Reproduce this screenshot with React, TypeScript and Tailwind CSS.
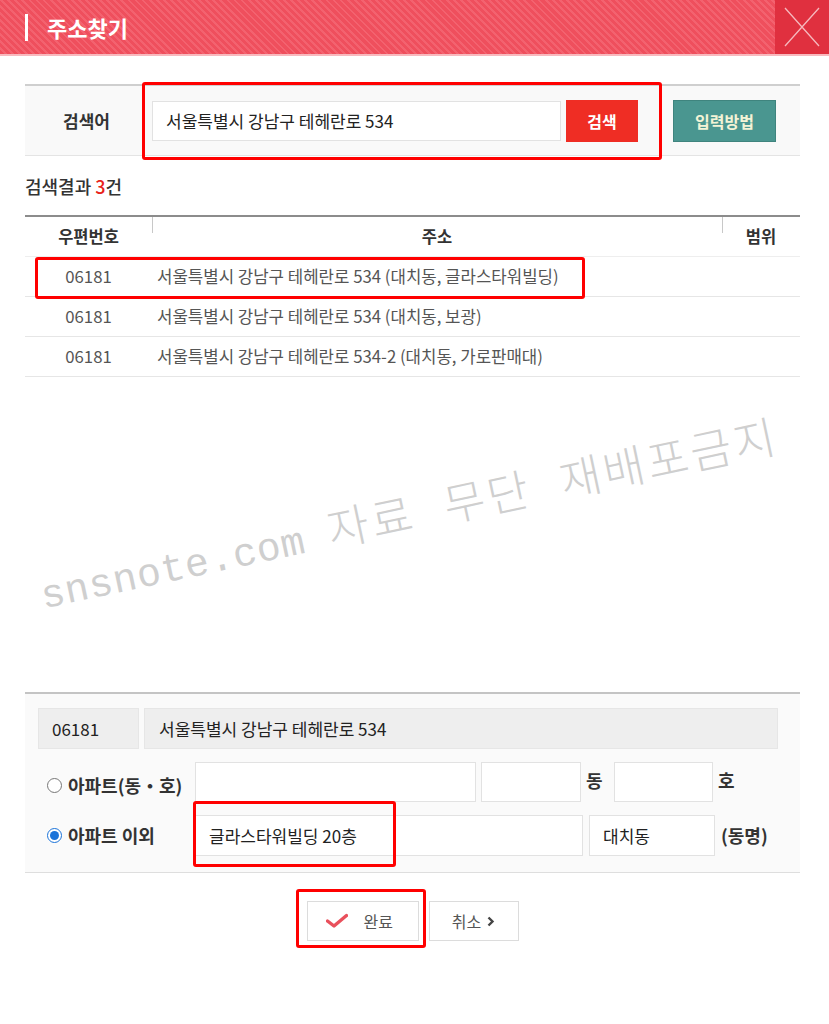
import type { ReactNode } from 'react';

const rows = [
  { zip: '06181', addr: '서울특별시 강남구 테헤란로 534 (대치동, 글라스타워빌딩)' },
  { zip: '06181', addr: '서울특별시 강남구 테헤란로 534 (대치동, 보광)' },
  { zip: '06181', addr: '서울특별시 강남구 테헤란로 534-2 (대치동, 가로판매대)' },
];

function Radio({ checked }: { checked?: boolean }) {
  return checked ? (
    <span className="flex h-[15px] w-[15px] items-center justify-center rounded-full border-[1.5px] border-[#1a73d9] bg-white">
      <span className="h-[9px] w-[9px] rounded-full bg-[#1a73d9]" />
    </span>
  ) : (
    <span className="h-[15px] w-[15px] rounded-full border border-[#777] bg-white" />
  );
}

function Field({ w, h = 'h-[40px]', children }: { w: string; h?: string; children?: ReactNode }) {
  return (
    <div className={`${w} ${h} flex items-center border border-[#e2e2e2] bg-white px-[13px] text-[17px] text-[#222]`}>
      {children}
    </div>
  );
}

// red annotation frame drawn over the form
function Mark({ className }: { className: string }) {
  return <div className={`pointer-events-none absolute rounded-[3px] border-[3px] border-[#ff0000] ${className}`} />;
}

export default function App() {
  return (
    <div className="relative min-h-[1024px] w-[829px] overflow-hidden bg-white font-['Noto_Sans_CJK_KR','Noto_Sans',sans-serif]">
      {/* title bar */}
      <div className="flex h-[56px] items-stretch border-b-2 border-[#f8b9be] bg-[repeating-linear-gradient(45deg,#ef4f5d_0px,#ef4f5d_3px,#f3626f_3px,#f3626f_5px)]">
        <div className="flex flex-1 items-center">
          <span className="ml-[25px] h-[27px] w-[3px] bg-white" />
          <span className="ml-[19px] text-[22px] font-bold text-white">주소찾기</span>
        </div>
        <div className="flex w-[54px] items-center justify-center bg-[#e0303f]">
          <svg width="36" height="40" viewBox="0 0 36 40">
            <path d="M1 1 L35 39 M35 1 L1 39" stroke="#f6b8bd" strokeWidth="1.3" fill="none" />
          </svg>
        </div>
      </div>

      <div className="mx-[25px] mt-[28px] w-[775px]">
        {/* search row */}
        <div className="flex h-[72px] items-center border-t-2 border-b border-t-[#cfcfcf] border-b-[#e4e4e4] bg-[#f9f9f9]">
          <div className="w-[127px] pr-[4px] text-center text-[17px] font-bold text-[#333]">검색어</div>
          <Field w="w-[409px]">서울특별시 강남구 테헤란로 534</Field>
          <button className="ml-[5px] h-[42px] w-[72px] bg-[#ef2d24] text-[16px] font-bold text-white">검색</button>
          <button className="ml-[35px] h-[42px] w-[103px] border border-[#3f847e] bg-[#4a9690] text-[16px] font-bold text-[#f3f3d6]">
            입력방법
          </button>
        </div>

        <div className="mt-[18px] h-[24px] text-[18px] font-medium leading-[24px] text-[#333]">
          검색결과 <span className="text-[#e8231b]">3</span>건
        </div>

        {/* result table */}
        <div className="mt-[17px] border-t-2 border-[#8c8c8c]">
          <div className="flex h-[40px] items-center border-b border-[#eeeeee] text-[16.5px] font-bold text-[#333]">
            <div className="w-[127px] text-center">우편번호</div>
            <div className="relative flex h-full w-[570px] items-center justify-center">
              <span className="absolute left-0 top-0 h-[16px] w-px bg-[#c8c8c8]" />
              주소
            </div>
            <div className="relative flex h-full w-[78px] items-center justify-center">
              <span className="absolute left-0 top-0 h-[16px] w-px bg-[#c8c8c8]" />
              범위
            </div>
          </div>
          {rows.map((r, i) => (
            <div key={i} className="flex h-[40px] items-center border-b border-[#e6e6e6] text-[16.75px] text-[#555]">
              <div className="w-[127px] text-center">{r.zip}</div>
              <div className="w-[570px] pl-[5px]">{r.addr}</div>
            </div>
          ))}
        </div>

        {/* selected address */}
        <div className="mt-[315px] border-t-2 border-b border-t-[#c4c4c4] border-b-[#dedede] bg-[#fafafa] pb-[16px] pl-[13px] pt-[14px]">
          <div className="flex gap-[5px] text-[17px] text-[#222]">
            <div className="flex h-[41px] w-[101px] items-center border border-[#e6e6e6] bg-[#eeeeee] px-[13px]">06181</div>
            <div className="flex h-[41px] w-[634px] items-center border border-[#e6e6e6] bg-[#eeeeee] px-[14px]">
              서울특별시 강남구 테헤란로 534
            </div>
          </div>

          <div className="mt-[13px] flex items-center">
            <div className="flex w-[157px] items-center gap-[6px] pl-[9px] pt-[6px] text-[18px] font-bold text-[#333]">
              <Radio />
              아파트(동・호)
            </div>
            <Field w="w-[281px]" />
            <div className="ml-[5px]">
              <Field w="w-[100px]" />
            </div>
            <span className="ml-[5px] w-[28px] pb-[4px] text-[18px] font-bold text-[#333]">동</span>
            <Field w="w-[99px]" />
            <span className="ml-[5px] pb-[4px] text-[18px] font-bold text-[#333]">호</span>
          </div>

          <div className="mt-[13px] flex items-center">
            <div className="flex w-[157px] items-center gap-[6px] pl-[9px] text-[18px] font-bold text-[#333]">
              <Radio checked />
              아파트 이외
            </div>
            <Field w="w-[388px]" h="h-[41px]">글라스타워빌딩 20층</Field>
            <div className="ml-[6px]">
              <Field w="w-[126px]" h="h-[41px]">대치동</Field>
            </div>
            <span className="ml-[6px] text-[18px] font-bold text-[#333]">(동명)</span>
          </div>
        </div>

        {/* actions */}
        <div className="mt-[28px] flex justify-center gap-[10px]">
          <button className="flex h-[40px] w-[112px] items-center border border-[#dcdcdc] bg-white pl-[18px] text-[16px] text-[#555]">
            <svg width="22" height="16" viewBox="0 0 22 16">
              <path d="M1.5 8 L8 13 L20.5 2.5" stroke="#e9505c" strokeWidth="3.4" fill="none" strokeLinecap="round" strokeLinejoin="round" />
            </svg>
            <span className="ml-[16px]">완료</span>
          </button>
          <button className="flex h-[40px] w-[90px] items-center justify-center gap-[6px] border border-[#dcdcdc] bg-white text-[16px] text-[#555]">
            취소
            <svg width="8" height="11" viewBox="0 0 8 11">
              <path d="M1.5 1.5 L5.5 5.5 L1.5 9.5" stroke="#444" strokeWidth="2.4" fill="none" />
            </svg>
          </button>
        </div>
      </div>

      {/* watermark */}
      <div className="pointer-events-none absolute left-[48px] top-[572px] origin-bottom-left -rotate-12 whitespace-nowrap font-['Liberation_Mono','Noto_Sans_CJK_KR',monospace] font-light leading-[50px] text-[#cfcfcf]">
        <span className="text-[40px] tracking-[0.5px]">snsnote.com </span>
        <span className="text-[45px] tracking-[3px]">자료 무단 재배포금지</span>
      </div>

      <Mark className="left-[142px] top-[82px] h-[78px] w-[520px]" />
      <Mark className="left-[35px] top-[257px] h-[42px] w-[550px]" />
      <Mark className="left-[193px] top-[801px] h-[66px] w-[203px]" />
      <Mark className="left-[296px] top-[889px] h-[59px] w-[130px]" />
    </div>
  );
}
